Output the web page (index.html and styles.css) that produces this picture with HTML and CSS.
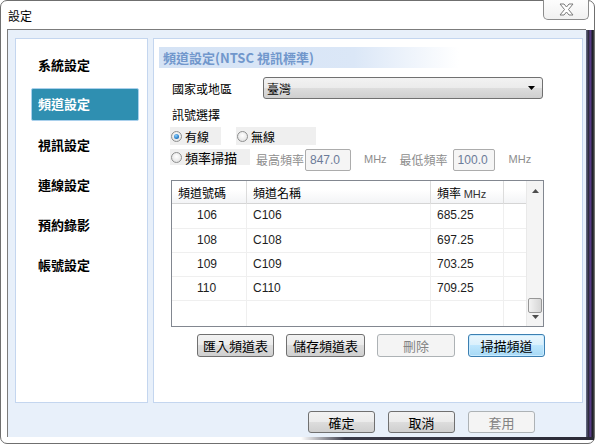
FILE: index.html
```html
<!DOCTYPE html>
<html>
<head>
<meta charset="utf-8">
<link rel="stylesheet" href="styles.css">
</head>
<body>
<div class="window">
  <div class="titlebar"><span class="title">設定</span></div>
  <div class="close">
    <svg width="17" height="13" viewBox="0 0 17 13"><path d="M2 1 L6 1 L8.5 4 L11 1 L15 1 L10.5 6.5 L15 12 L11 12 L8.5 9 L6 12 L2 12 L6.5 6.5 Z" fill="#fff" stroke="#7a7a7a" stroke-width="1"/></svg>
  </div>
  <div class="client">
    <div class="panels">
      <div class="nav">
        <div class="nav-item">系統設定</div>
        <div class="nav-item active">頻道設定</div>
        <div class="nav-item">視訊設定</div>
        <div class="nav-item">連線設定</div>
        <div class="nav-item">預約錄影</div>
        <div class="nav-item">帳號設定</div>
      </div>
      <div class="main">
        <div class="header">頻道設定(NTSC 視訊標準)</div>
        <div class="row country">
          <span class="label">國家或地區</span>
          <div class="select"><span>臺灣</span><svg class="arrow" width="7" height="4" viewBox="0 0 7 4"><path d="M0 0 H7 L3.5 4 Z" fill="#000"/></svg></div>
        </div>
        <div class="section-label">訊號選擇</div>
        <div class="row radios">
          <div class="radio-box b1"><span class="radio checked"></span><span>有線</span></div>
          <div class="radio-box b2"><span class="radio"></span><span>無線</span></div>
        </div>
        <div class="row scan">
          <div class="radio-box b3"><span class="radio"></span><span>頻率掃描</span></div>
          <span class="dim l1">最高頻率</span>
          <div class="input i1">847.0</div>
          <span class="dim u1">MHz</span>
          <span class="dim l2">最低頻率</span>
          <div class="input i2">100.0</div>
          <span class="dim u2">MHz</span>
        </div>
        <div class="table">
          <div class="grid">
            <div class="thead">
              <div class="th c1">頻道號碼</div>
              <div class="th c2">頻道名稱</div>
              <div class="th c3">頻率 <span class="mhz">MHz</span></div>
              <div class="th c4"></div>
            </div>
            <div class="tr"><div class="td c1 num">106</div><div class="td c2">C106</div><div class="td c3">685.25</div><div class="td c4"></div></div>
            <div class="tr"><div class="td c1 num">108</div><div class="td c2">C108</div><div class="td c3">697.25</div><div class="td c4"></div></div>
            <div class="tr"><div class="td c1 num">109</div><div class="td c2">C109</div><div class="td c3">703.25</div><div class="td c4"></div></div>
            <div class="tr"><div class="td c1 num">110</div><div class="td c2">C110</div><div class="td c3">709.25</div><div class="td c4"></div></div>
            <div class="tr last"><div class="td c1"></div><div class="td c2"></div><div class="td c3"></div><div class="td c4"></div></div>
          </div>
          <div class="scrollbar">
            <svg class="sb-up" width="7" height="4" viewBox="0 0 7 4"><path d="M0 4 H7 L3.5 0 Z" fill="#4d4d4d"/></svg>
            <div class="sb-track"><div class="sb-thumb"></div></div>
            <svg class="sb-down" width="7" height="4" viewBox="0 0 7 4"><path d="M0 0 H7 L3.5 4 Z" fill="#4d4d4d"/></svg>
          </div>
        </div>
        <div class="actions">
          <div class="btn a1">匯入頻道表</div>
          <div class="btn a2">儲存頻道表</div>
          <div class="btn a3 disabled">刪除</div>
          <div class="btn a4 focused">掃描頻道</div>
        </div>
      </div>
    </div>
    <div class="footer">
      <div class="btn f">確定</div>
      <div class="btn f">取消</div>
      <div class="btn f disabled">套用</div>
    </div>
  </div>
  <div class="glass-right"></div>
  <div class="glass-bottom"></div>
</div>
</body>
</html>
```

FILE: styles.css
```css
* { box-sizing: border-box; }
html, body { margin: 0; padding: 0; background: #fff; }
body { width: 596px; height: 444px; overflow: hidden; font-family: "Noto Sans CJK TC", "Liberation Sans", sans-serif; font-size: 12px; color: #000; }

.window {
  position: relative;
  width: 595px;
  height: 444px;
  border: 1px solid #6f6f6f;
  border-radius: 7px;
  background: #fff;
}
.titlebar { height: 28px; display: flex; align-items: center; padding-left: 7px; }
.title { font-size: 12px; line-height: 14px; margin-top: 1px; }
.close {
  position: absolute;
  left: 542px; top: -1px;
  width: 46px; height: 20px;
  border: 1px solid #8c8c8c;
  border-top: none;
  border-radius: 0 0 5px 5px;
  background: linear-gradient(#fdfdfd, #f1f1f1);
  display: flex; align-items: center; justify-content: center;
}

.client {
  margin-left: 6px;
  width: 579px;
  height: 408px;
  border-left: 1px solid #7c7c7c;
  border-top: 1px solid #7c7c7c;
  background: #e8f0fa;
  padding: 8px 0 0 7px;
}
.panels { display: flex; gap: 5px; height: 365px; }
.nav {
  width: 133px;
  border: 1px solid #c4d6ef;
  background: #fff;
  padding: 9px 0 0 15px;
  display: flex; flex-direction: column; gap: 7px;
}
.nav-item {
  width: 108px; height: 33px;
  padding-left: 6px;
  font-weight: bold; font-size: 13px;
  display: flex; align-items: center;
  border: 1px solid transparent;
  border-radius: 2px;
}
.nav-item.active {
  background: #2f8fb1;
  border-color: #a9d0ec;
  color: #fff;
  padding-bottom: 2px;
}

.main {
  width: 430px;
  border: 1px solid #c4d6ef;
  background: #fff;
  padding: 8px 0 0 18px;
}
.header {
  margin-left: -13px;
  width: 300px;
  height: 21px;
  padding-left: 4px;
  line-height: 21px;
  font-weight: bold; font-size: 13px;
  color: #7197cc;
  background: linear-gradient(to right, #d5e3f5 0%, #dbe7f7 65%, rgba(232,240,250,0) 100%);
}
.row { display: flex; align-items: center; }
.country { margin-top: 9px; height: 22px; }
.label { width: 91px; }
.select {
  width: 280px; height: 22px;
  border: 1px solid #707070;
  border-radius: 3px;
  background: linear-gradient(#f2f2f2 0%, #ebebeb 50%, #dddddd 50%, #cfcfcf 100%);
  display: flex; align-items: center; justify-content: space-between;
  padding: 0 7px 0 3px;
}
.section-label { margin-top: 7px; height: 18px; line-height: 18px; }
.radios { margin-top: 3px; height: 18px; }
.radio-box {
  display: flex; align-items: center;
  background: #efefef;
  height: 18px;
  padding-left: 1px;
}
.radio {
  width: 11px; height: 11px;
  border-radius: 50%;
  border: 1px solid #8e8f8f;
  background: radial-gradient(circle at 50% 40%, #ffffff 0%, #e6e6e6 70%, #d6d6d6 100%);
  margin-right: 3px;
  position: relative;
}
.radio.checked::after {
  content: "";
  position: absolute;
  left: 2px; top: 2px;
  width: 5px; height: 5px;
  border-radius: 50%;
  background: radial-gradient(circle at 40% 35%, #8fd1ff 0%, #2a7fc8 60%, #0d4f95 100%);
}
.b1 { margin-left: -2px; width: 51px; }
.b2 { margin-left: 15px; width: 80px; }
.scan { margin-top: 4px; height: 21px; align-items: flex-start; }
.b3 { margin-left: -2px; width: 80px; height: 16px; font-size: 13px; }
.dim { color: #8d8d8d; line-height: 21px; }
.l1 { margin-left: 6px; width: 49px; }
.input {
  height: 22px;
  border: 1px solid #acacac;
  border-radius: 2px;
  background: #f5f5f5;
  color: #6b7b98;
  font-family: "Liberation Sans", sans-serif;
  font-size: 12px;
  line-height: 20px;
  padding-left: 4px;
}
.i1 { width: 46px; }
.u1 { margin-left: 13px; font-family: "Liberation Sans", sans-serif; font-size: 11px; }
.l2 { margin-left: 13px; width: 53px; }
.i2 { width: 42px; }
.u2 { margin-left: 14px; font-family: "Liberation Sans", sans-serif; font-size: 11px; }

.table {
  margin-top: 10px;
  margin-left: -1px;
  width: 373px; height: 147px;
  border: 1px solid #828790;
  display: flex;
}
.grid { width: 354px; display: flex; flex-direction: column; }
.thead { display: flex; height: 23px; background: linear-gradient(#ffffff 0%, #ffffff 40%, #f3f4f6 100%); border-bottom: 1px solid #d5d5d5; }
.th {
  height: 23px; line-height: 23px;
  padding-left: 6px;
  border-right: 1px solid #dcdcdc;
  font-size: 12px;
}
.mhz { font-family: "Liberation Sans", sans-serif; font-size: 11px; color: #333; }
.c1 { width: 75px; }
.c2 { width: 184px; }
.c3 { width: 73px; }
.c4 { width: 22px; border-right: none; }
.tr { display: flex; height: 24px; border-bottom: 1px solid #efefef; }
.tr:nth-child(2) { height: 25px; }
.tr.last { border-bottom: none; flex: 1; }
.td {
  line-height: 23px;
  padding-left: 6px;
  border-right: 1px solid #efefef;
  font-family: "Liberation Sans", sans-serif;
  font-size: 12px;
  color: #1d1d1d;
}
.td.c4 { border-right: none; }
.td.num { padding-left: 25px; }
.scrollbar {
  width: 17px;
  background: #f4f4f4;
  border-left: 1px solid #e9e9e9;
  display: flex; flex-direction: column; align-items: center;
  padding-top: 8px;
}
.sb-track { flex: 1; width: 100%; display: flex; flex-direction: column; justify-content: flex-end; padding-bottom: 2px; }
.sb-thumb {
  margin-left: 1px;
  width: 14px; height: 15px;
  border: 1px solid #979797;
  border-radius: 2px;
  background: linear-gradient(to right, #f3f3f3, #e4e4e4 50%, #d6d6d6);
}
.sb-down { margin-bottom: 7px; }

.actions { display: flex; margin-top: 7px; margin-left: 25px; height: 23px; }
.btn {
  height: 23px;
  border: 1px solid #707070;
  border-radius: 3px;
  background: linear-gradient(#f2f2f2 0%, #ebebeb 50%, #dddddd 50%, #cfcfcf 100%);
  display: flex; align-items: center; justify-content: center;
  font-size: 13px;
}
.btn.disabled {
  border-color: #adb2b5;
  background: #f4f4f4;
  color: #838383;
}
.btn.focused {
  border-color: #3c7fb1;
  background: linear-gradient(#eaf6fd 0%, #d9f0fc 50%, #bee6fd 50%, #a7d9f5 100%);
  box-shadow: inset 0 0 0 1px #c9ebff;
}
.a1 { width: 77px; }
.a2 { width: 79px; margin-left: 12px; }
.a3 { width: 78px; margin-left: 12px; }
.a4 { width: 77px; margin-left: 13px; }

.footer { display: flex; justify-content: flex-end; gap: 13px; margin-top: 8px; padding-right: 51px; }
.btn.f { width: 67px; height: 22px; }

.glass-right {
  position: absolute;
  left: 585px; top: 29px;
  width: 8px; height: 410px;
  background: linear-gradient(to right, #6a6f8a 0%, #2b2b3c 30%, #5a3c8a 55%, #1c1c28 80%, #444 100%);
}
.glass-bottom {
  position: absolute;
  left: 300px; top: 436px;
  width: 293px; height: 3px;
  background: linear-gradient(to right, rgba(40,40,50,0) 0%, #3a3a48 15%, #2a2a36 100%);
}
```
